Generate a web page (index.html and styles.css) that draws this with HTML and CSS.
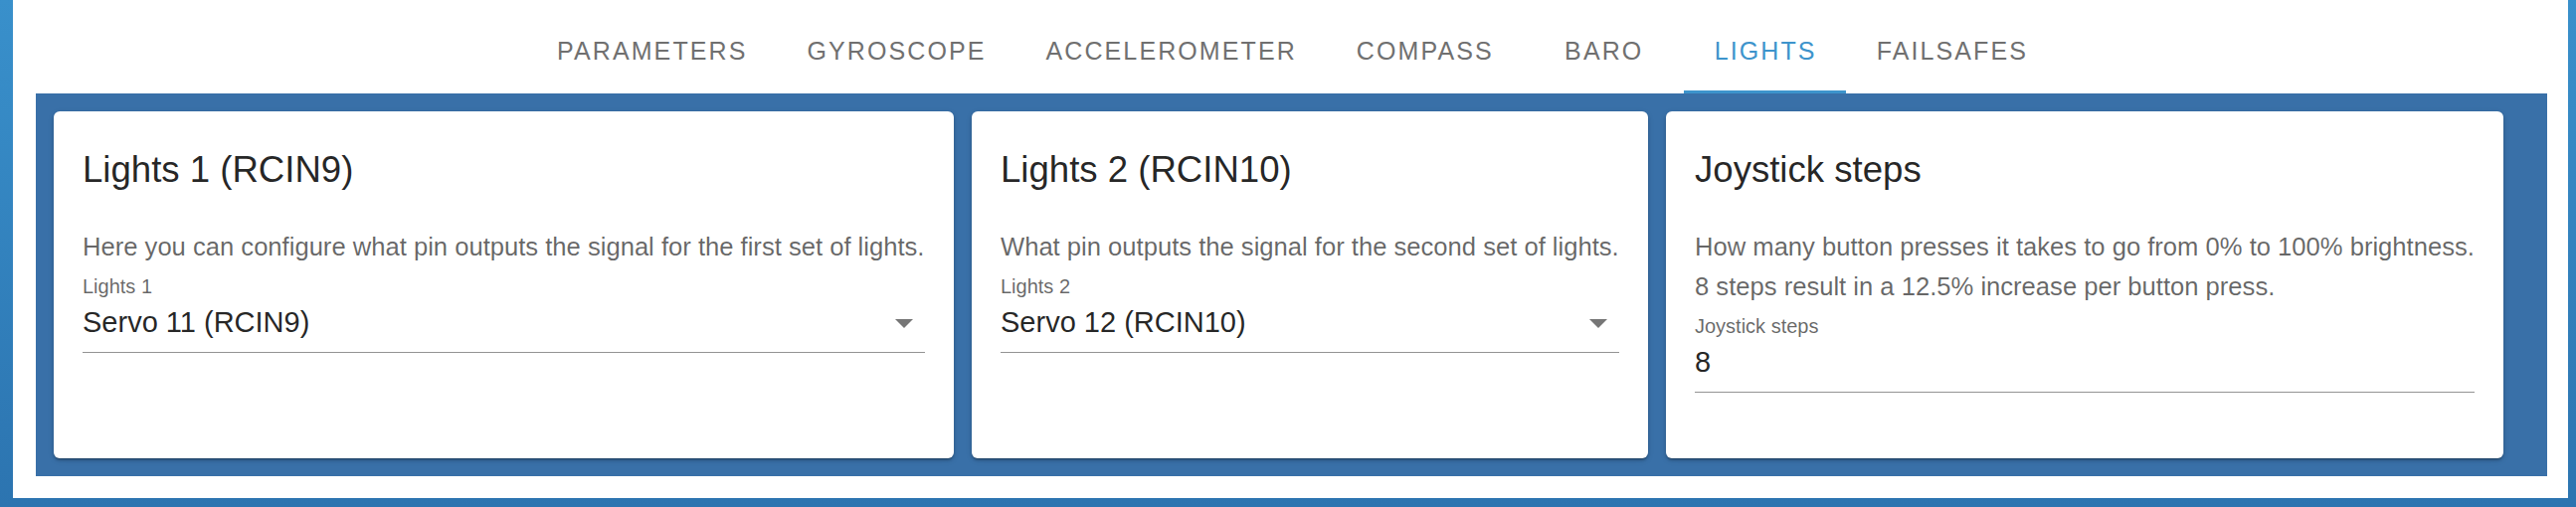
FILE: index.html
```html
<!DOCTYPE html>
<html lang="en">
<head>
<meta charset="utf-8">
<title>Lights</title>
<link rel="stylesheet" href="styles.css">
</head>
<body class="page">
  <div class="window">
    <nav class="tabs">
      <div class="tab">Parameters</div>
      <div class="tab">Gyroscope</div>
      <div class="tab">Accelerometer</div>
      <div class="tab">Compass</div>
      <div class="tab">Baro</div>
      <div class="tab tab--active">Lights</div>
      <div class="tab">Failsafes</div>
    </nav>
    <main class="panel">
      <section class="card card--lights1">
        <h2 class="card-title">Lights 1 (RCIN9)</h2>
        <p class="card-text">Here you can configure what pin outputs the signal for the first set of lights.</p>
        <div class="field">
          <div class="field-label">Lights 1</div>
          <div class="field-input field-input--select">
            <span class="field-value">Servo 11 (RCIN9)</span>
            <svg class="select-arrow" width="18" height="9" viewBox="7 10 10 5"><path d="M7 10l5 5 5-5z"/></svg>
          </div>
        </div>
      </section>
      <section class="card card--lights2">
        <h2 class="card-title">Lights 2 (RCIN10)</h2>
        <p class="card-text">What pin outputs the signal for the second set of lights.</p>
        <div class="field">
          <div class="field-label">Lights 2</div>
          <div class="field-input field-input--select">
            <span class="field-value">Servo 12 (RCIN10)</span>
            <svg class="select-arrow" width="18" height="9" viewBox="7 10 10 5"><path d="M7 10l5 5 5-5z"/></svg>
          </div>
        </div>
      </section>
      <section class="card card--joystick">
        <h2 class="card-title">Joystick steps</h2>
        <p class="card-text">How many button presses it takes to go from 0% to 100% brightness.</p>
        <p class="card-text">8 steps result in a 12.5% increase per button press.</p>
        <div class="field">
          <div class="field-label">Joystick steps</div>
          <div class="field-input">
            <span class="field-value">8</span>
          </div>
        </div>
      </section>
    </main>
  </div>
</body>
</html>
```
FILE: styles.css
```css
* {
  box-sizing: border-box;
}

html, body {
  margin: 0;
  height: 100%;
}

.page {
  width: 2590px;
  height: 510px;
  padding: 0 8px 9px 13px;
  background: linear-gradient(to bottom, #3990cb, #2c74b0);
  font-family: "Liberation Sans", Arial, Helvetica, sans-serif;
  overflow: hidden;
}

.window {
  height: 501px;
  background: #ffffff;
  padding: 0 21px 22px 23px;
  display: flex;
  flex-direction: column;
}

.tabs {
  display: flex;
  justify-content: center;
  padding-top: 8px;
  height: 94px;
  flex: none;
}

.tab {
  min-width: 162px;
  height: 86px;
  padding: 0 29px 0 31px;
  display: flex;
  align-items: center;
  justify-content: center;
  font-size: 25px;
  letter-spacing: 2.1px;
  text-transform: uppercase;
  color: #707070;
  white-space: nowrap;
}

.tab--active {
  color: #3d94cc;
  box-shadow: inset 0 -3px 0 #3d94cc;
}

.panel {
  flex: 1;
  background: #3970a8;
  padding: 18px;
  display: flex;
  gap: 18px;
  align-items: stretch;
}

.card {
  flex: none;
  background: #ffffff;
  border-radius: 6px;
  padding: 30px 29px;
  box-shadow: 0 3px 2px -2px rgba(0, 0, 0, 0.25), 0 2px 3px rgba(0, 0, 0, 0.16), 0 2px 6px rgba(0, 0, 0, 0.12);
}

.card--lights1 {
  width: 905px;
}

.card--lights2 {
  width: 680px;
}

.card--joystick {
  width: 842px;
}

.card-title {
  margin: 0 0 28px;
  font-size: 36.6px;
  font-weight: 400;
  line-height: 57.6px;
  color: rgba(0, 0, 0, 0.87);
  white-space: nowrap;
}

.card-text {
  margin: 0;
  font-size: 25.6px;
  line-height: 40px;
  color: rgba(0, 0, 0, 0.6);
  white-space: nowrap;
}

.field {
  display: flex;
  flex-direction: column;
}

.field-label {
  padding-top: 8px;
  font-size: 20px;
  line-height: 24px;
  color: rgba(0, 0, 0, 0.6);
}

.field-input {
  display: flex;
  align-items: center;
  justify-content: space-between;
  padding: 4px 0 10px;
  border-bottom: 1px solid #949494;
}

.field-input--select {
  padding-right: 12px;
}

.field-value {
  font-size: 29px;
  line-height: 40px;
  color: rgba(0, 0, 0, 0.87);
  white-space: nowrap;
}

.select-arrow {
  fill: #767676;
  margin-top: 3px;
}
```
